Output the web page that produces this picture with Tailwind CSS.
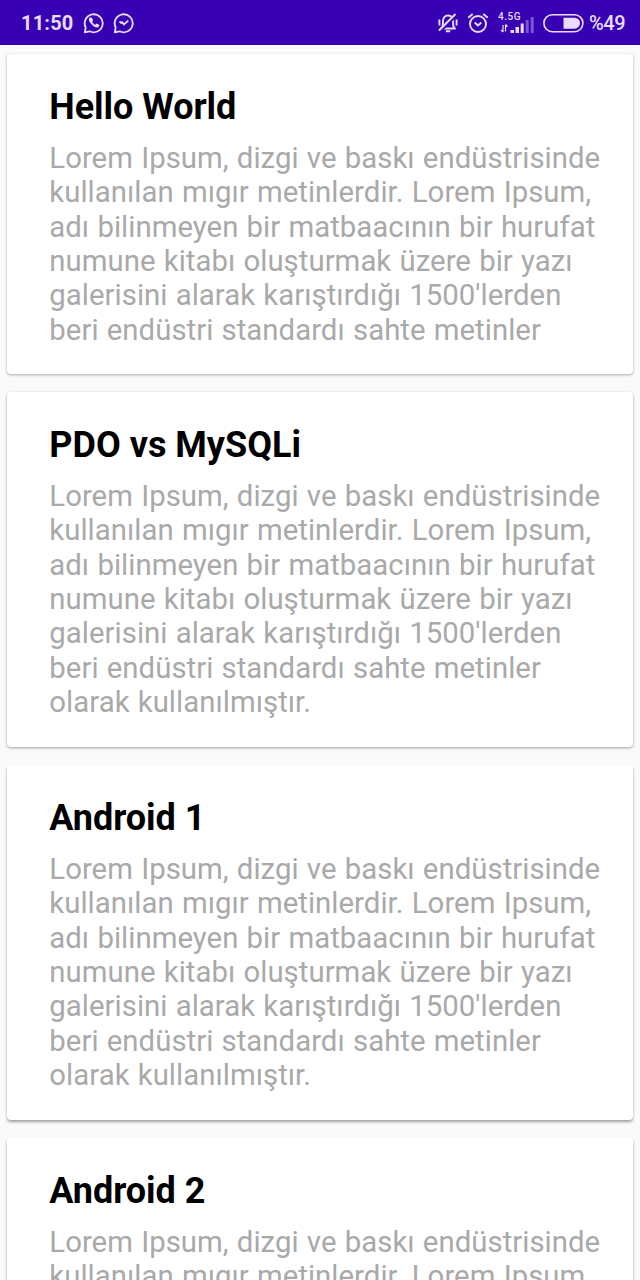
<!DOCTYPE html>
<html lang="tr">
<head>
<meta charset="utf-8">
<title>Liste</title>
<script src="https://cdn.jsdelivr.net/npm/@tailwindcss/browser@4"></script>
</head>
<body class="h-[1280px] overflow-hidden bg-[#fafafa] font-[Roboto,sans-serif]">
<div class="flex h-[1280px] flex-col overflow-hidden">
<header class="flex h-[45px] shrink-0 items-center bg-[#3700b3] pl-[21px] text-[#eadcff]">
  <span class="w-[62px] text-[20px] leading-none font-bold tracking-[0.2px] whitespace-nowrap">11:50</span>
  <svg class="h-[22px] w-[22px] shrink-0" viewBox="0 0 22 22" fill="none" stroke="currentColor" stroke-width="1.8">
    <path d="M1.8 20.4 2.7 15.4A9 9 0 1 1 6.6 19.3Z" stroke-linejoin="round"/>
    <path d="M6.800 5.600c-1.500 1-1.200 3.500 1.300 6.200s5.300 4.700 7.600 3.300l.7-2-2.800-1.500-1.400 1.200c-1.300-.5-2.500-1.800-3-3l1-1.200-1.400-2.900Z" fill="currentColor" stroke="none"/>
  </svg>
  <svg class="ml-[8px] h-[22px] w-[22px] shrink-0" viewBox="0 0 22 22" fill="none" stroke="currentColor" stroke-width="1.8">
    <path d="M1.800 20.400 2.700 15.400A9 9 0 1 1 6.600 19.300Z" stroke-linejoin="round"/>
    <path d="M6.500 9.300 8.300 11 9.300 10.300 11 12.500 15.300 8.700" stroke-width="1.800"/>
  </svg>
  <svg class="ml-[302px] h-[22px] w-[22px] shrink-0" viewBox="0 0 22 22" fill="none" stroke="currentColor" stroke-width="1.900">
    <path d="M3.200 16.500h15.600M5 16c.8-1.500 1-3 1-6.500 0-3.800 1.800-6 5-6s5 2.200 5 6c0 3.500.2 5 1 6.500M8.800 19.300h4.400M2.400 7.500v6M19.600 7.500v6"/>
    <path d="M2.700 19.200 19.200 2.700" stroke="#3700b3" stroke-width="3.500"/>
    <path d="M2 18.500 18.500 2"/>
  </svg>
  <svg class="ml-[8px] h-[22px] w-[22px] shrink-0" viewBox="0 0 22 22" fill="none" stroke="currentColor" stroke-width="1.900">
    <circle cx="11" cy="12" r="8"/>
    <path d="M7.700 10.500 11 13.500 14.300 10.500M1.200 5.700 5.700 1.900M20.800 5.700 16.300 1.900"/>
  </svg>
  <div class="ml-[9px] flex h-[22px] w-[36px] shrink-0 flex-col">
    <span class="h-[8px] text-[10px] leading-[9px] font-medium tracking-[0.500px] whitespace-nowrap">4.5G</span>
    <svg class="-mt-[4px] h-[18px] w-[36px] shrink-0" viewBox="0 0 36 18" fill="currentColor">
      <path d="M5 9v7M7.500 15.500V8.500M3 14 5 16M9.500 10.500 7.500 8.500" fill="none" stroke="currentColor" stroke-width="1.200"/>
      <path d="M12.500 14h3.500v3h-3.500zM17.500 11h3.500v6h-3.500zM22.700 7.500h3V17h-3z"/>
      <path d="M27.700 4h3v13h-3zM32.700 1h3v16h-3z" fill="#7d55d6"/>
    </svg>
  </div>
  <svg class="ml-[9px] h-[20px] w-[41px] shrink-0" viewBox="0 0 41 20">
    <rect x=".900" y="1.700" width="39" height="17" rx="8.500" fill="none" stroke="currentColor" stroke-width="1.600"/>
    <path d="M20.500 4.700h11a5.500 5.500 0 0 1 0 11h-11Z" fill="currentColor"/>
  </svg>
  <span class="ml-[5px] text-[20px] leading-none font-medium tracking-[-0.400px] whitespace-nowrap">%49</span>
</header>
<main class="flex flex-col gap-[18px] px-[7px] pt-[9px] text-[29.330px] leading-[34.350px] whitespace-nowrap text-[#a9a9a9]">
  <article class="h-[320px] shrink-0 rounded-[4px] bg-white px-[42.300px] pt-[32px] shadow-[0_1px_3px_rgba(0,0,0,0.32)]">
    <h2 class="mb-[13px] text-[36px] leading-[42px] font-bold tracking-[-0.040px] text-black">Hello World</h2>
    <p class="tracking-[0.040px] [word-spacing:0.900px]">Lorem Ipsum, dizgi ve baskı endüstrisinde<br>kullanılan mıgır metinlerdir. Lorem Ipsum,<br>adı bilinmeyen bir matbaacının bir hurufat<br>numune kitabı oluşturmak üzere bir yazı<br>galerisini alarak karıştırdığı 1500'lerden<br>beri endüstri standardı sahte metinler</p>
  </article>
  <article class="h-[355px] shrink-0 rounded-[4px] bg-white px-[42.300px] pt-[32px] shadow-[0_1px_3px_rgba(0,0,0,0.36)]">
    <h2 class="mb-[13px] text-[36px] leading-[42px] font-bold text-black">PDO vs MySQLi</h2>
    <p class="tracking-[0.040px] [word-spacing:0.900px]">Lorem Ipsum, dizgi ve baskı endüstrisinde<br>kullanılan mıgır metinlerdir. Lorem Ipsum,<br>adı bilinmeyen bir matbaacının bir hurufat<br>numune kitabı oluşturmak üzere bir yazı<br>galerisini alarak karıştırdığı 1500'lerden<br>beri endüstri standardı sahte metinler<br>olarak kullanılmıştır.</p>
  </article>
  <article class="h-[355px] shrink-0 rounded-[4px] bg-white px-[42.300px] pt-[32px] shadow-[0_2px_3px_rgba(0,0,0,0.36)]">
    <h2 class="mb-[13px] text-[36px] leading-[42px] font-bold tracking-[-0.040px] text-black">Android 1</h2>
    <p class="tracking-[0.040px] [word-spacing:0.900px]">Lorem Ipsum, dizgi ve baskı endüstrisinde<br>kullanılan mıgır metinlerdir. Lorem Ipsum,<br>adı bilinmeyen bir matbaacının bir hurufat<br>numune kitabı oluşturmak üzere bir yazı<br>galerisini alarak karıştırdığı 1500'lerden<br>beri endüstri standardı sahte metinler<br>olarak kullanılmıştır.</p>
  </article>
  <article class="h-[355px] shrink-0 rounded-[4px] bg-white px-[42.300px] pt-[32px] shadow-[0_2px_3px_rgba(0,0,0,0.36)]">
    <h2 class="mb-[13px] text-[36px] leading-[42px] font-bold tracking-[-0.040px] text-black">Android 2</h2>
    <p class="tracking-[0.040px] [word-spacing:0.900px]">Lorem Ipsum, dizgi ve baskı endüstrisinde<br>kullanılan mıgır metinlerdir. Lorem Ipsum,</p>
  </article>
</main>
</div>
</body>
</html>
